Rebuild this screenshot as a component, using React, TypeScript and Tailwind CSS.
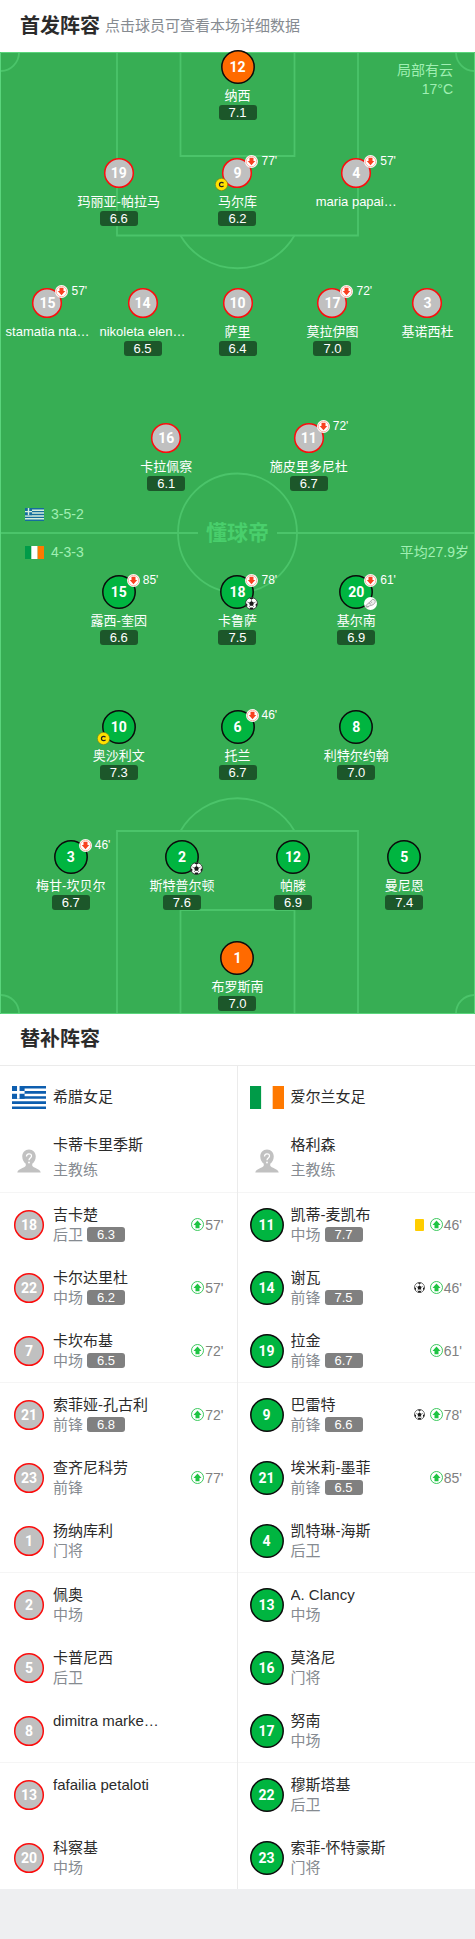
import React from "react";
import { clsx } from "clsx";

type Kit = "grey" | "green" | "orange";

interface PitchPlayer {
  no: number;
  name: string;
  rating?: string;
  off?: string;
  captain?: boolean;
  goal?: boolean;
  assist?: boolean;
  kit: Kit;
}

interface BenchPlayer {
  no: number;
  name: string;
  role?: string;
  rating?: string;
  on?: string;
  goal?: boolean;
  yellow?: boolean;
}

const homeRows: PitchPlayer[][] = [
  [{ no: 12, name: "纳西", rating: "7.1", kit: "orange" }],
  [
    { no: 19, name: "玛丽亚-帕拉马", rating: "6.6", kit: "grey" },
    { no: 9, name: "马尔库", rating: "6.2", off: "77'", captain: true, kit: "grey" },
    { no: 4, name: "maria papai…", off: "57'", kit: "grey" },
  ],
  [
    { no: 15, name: "stamatia nta…", off: "57'", kit: "grey" },
    { no: 14, name: "nikoleta elen…", rating: "6.5", kit: "grey" },
    { no: 10, name: "萨里", rating: "6.4", kit: "grey" },
    { no: 17, name: "莫拉伊图", rating: "7.0", off: "72'", kit: "grey" },
    { no: 3, name: "基诺西杜", kit: "grey" },
  ],
  [
    { no: 16, name: "卡拉佩察", rating: "6.1", kit: "grey" },
    { no: 11, name: "施皮里多尼杜", rating: "6.7", off: "72'", kit: "grey" },
  ],
];

const awayRows: PitchPlayer[][] = [
  [
    { no: 15, name: "露西-奎因", rating: "6.6", off: "85'", kit: "green" },
    { no: 18, name: "卡鲁萨", rating: "7.5", off: "78'", goal: true, kit: "green" },
    { no: 20, name: "基尔南", rating: "6.9", off: "61'", assist: true, kit: "green" },
  ],
  [
    { no: 10, name: "奥沙利文", rating: "7.3", captain: true, kit: "green" },
    { no: 6, name: "托兰", rating: "6.7", off: "46'", kit: "green" },
    { no: 8, name: "利特尔约翰", rating: "7.0", kit: "green" },
  ],
  [
    { no: 3, name: "梅甘-坎贝尔", rating: "6.7", off: "46'", kit: "green" },
    { no: 2, name: "斯特普尔顿", rating: "7.6", goal: true, kit: "green" },
    { no: 12, name: "帕滕", rating: "6.9", kit: "green" },
    { no: 5, name: "曼尼恩", rating: "7.4", kit: "green" },
  ],
  [{ no: 1, name: "布罗斯南", rating: "7.0", kit: "orange" }],
];

const homeBench: BenchPlayer[] = [
  { no: 18, name: "吉卡楚", role: "后卫", rating: "6.3", on: "57'" },
  { no: 22, name: "卡尔达里杜", role: "中场", rating: "6.2", on: "57'" },
  { no: 7, name: "卡坎布基", role: "中场", rating: "6.5", on: "72'" },
  { no: 21, name: "索菲娅-孔古利", role: "前锋", rating: "6.8", on: "72'" },
  { no: 23, name: "查齐尼科劳", role: "前锋", on: "77'" },
  { no: 1, name: "扬纳库利", role: "门将" },
  { no: 2, name: "佩奥", role: "中场" },
  { no: 5, name: "卡普尼西", role: "后卫" },
  { no: 8, name: "dimitra marke…" },
  { no: 13, name: "fafailia petaloti" },
  { no: 20, name: "科察基", role: "中场" },
];

const awayBench: BenchPlayer[] = [
  { no: 11, name: "凯蒂-麦凯布", role: "中场", rating: "7.7", on: "46'", yellow: true },
  { no: 14, name: "谢瓦", role: "前锋", rating: "7.5", on: "46'", goal: true },
  { no: 19, name: "拉金", role: "前锋", rating: "6.7", on: "61'" },
  { no: 9, name: "巴雷特", role: "前锋", rating: "6.6", on: "78'", goal: true },
  { no: 21, name: "埃米莉-墨菲", role: "前锋", rating: "6.5", on: "85'" },
  { no: 4, name: "凯特琳-海斯", role: "后卫" },
  { no: 13, name: "A. Clancy", role: "中场" },
  { no: 16, name: "莫洛尼", role: "门将" },
  { no: 17, name: "努南", role: "中场" },
  { no: 22, name: "穆斯塔基", role: "后卫" },
  { no: 23, name: "索菲-怀特豪斯", role: "门将" },
];

const kitStyle = {
  grey: { fill: "#c0c0c0", stroke: "#fb0d0d", r: 14.3 },
  green: { fill: "#00b540", stroke: "#0b0b0b", r: 16.2 },
  orange: { fill: "#ff6a00", stroke: "#0b0b0b", r: 16.2 },
};

function Shirt({ no, kit }: { no: number; kit: Kit }) {
  const k = kitStyle[kit];
  return (
    <span className="grid size-[34px] shrink-0 place-items-center">
      <svg viewBox="0 0 34 34" className="col-start-1 row-start-1 size-[34px]" aria-hidden="true">
        <circle cx="17" cy="17" r={k.r} fill={k.fill} stroke={k.stroke} strokeWidth="1.5" />
      </svg>
      <span className="col-start-1 row-start-1 font-[Roboto,sans-serif] text-[14px] leading-none font-bold text-white">
        {no}
      </span>
    </span>
  );
}

function OffIcon({ className }: { className?: string }) {
  return (
    <svg viewBox="0 0 26 26" className={className} aria-hidden="true">
      <circle cx="13" cy="13" r="13" fill="#fff" />
      <circle cx="13" cy="13" r="10.5" fill="#fff" stroke="#fb6a50" strokeWidth="1" />
      <path d="M9 5.500h8v6.500H20.500L13 20.500 5.500 12H9z" fill="#f9401f" />
    </svg>
  );
}

function OnIcon({ className }: { className?: string }) {
  return (
    <svg viewBox="0 0 26 26" className={className} aria-hidden="true">
      <circle cx="13" cy="13" r="12" fill="#fff" stroke="#27c24c" strokeWidth="1.800" />
      <path d="M9 20.500h8V14H21L13 5 5 14h4z" fill="#1fc443" />
    </svg>
  );
}

function BallIcon({ className }: { className?: string }) {
  return (
    <svg viewBox="0 0 24 24" className={className} aria-hidden="true">
      <circle cx="12" cy="12" r="11" fill="#fff" stroke="#1a1a1a" strokeWidth="1.300" />
      <path
        d="M12 7.500l4.500 3.300-1.700 5.300H9.200l-1.700-5.300zM7.500 2.200 12 4.600l4.500-2.400a11 11 0 0 0-9 0zM22.900 10.500l-3.500 3.300.9 5a11 11 0 0 0 2.600-8.300zM1.100 10.500l3.500 3.300-.9 5a11 11 0 0 1-2.600-8.300zM8 22.200l1.800-3h4.400l1.800 3a11 11 0 0 1-8 0z"
        fill="#1a1a1a"
      />
      <path
        d="M12 7.500V4.600M16.500 10.800l3-1.500M14.800 16.100l1.800 2.600M9.200 16.100l-1.800 2.600M7.500 10.800l-3-1.500"
        stroke="#1a1a1a"
        strokeWidth="1"
      />
    </svg>
  );
}

function BootIcon({ className }: { className?: string }) {
  return (
    <svg viewBox="0 0 24 24" className={className} aria-hidden="true">
      <circle cx="12" cy="12" r="12" fill="#fff" />
      <path
        d="M3 17c1-3 4-4 6-6l7-7 4.500 2c1 3-.5 6-3.500 8-3 2-6 1.500-8 3-2 1.300-5 2-6 0z"
        fill="#eee"
        stroke="#8a8a8a"
        strokeWidth="1.300"
      />
      <path d="M9 11l4 2.500M12 8.500l3 2M4 18.500l5-.5" stroke="#8a8a8a" strokeWidth="1.200" />
    </svg>
  );
}

function CaptainIcon({ className }: { className?: string }) {
  return (
    <svg viewBox="0 0 26 26" className={className} aria-hidden="true">
      <circle cx="13" cy="13" r="12.300" fill="#ffe100" stroke="#6b7a1c" strokeWidth="1.200" />
      <path
        d="M17 10.500c-.8-1.300-2.200-1.900-3.700-1.900-2.600 0-4.400 1.900-4.400 4.400s1.800 4.400 4.400 4.400c1.500 0 2.900-.6 3.700-1.900"
        fill="none"
        stroke="#222"
        strokeWidth="2.400"
      />
    </svg>
  );
}

function GreeceFlag({ className }: { className?: string }) {
  return (
    <svg viewBox="0 0 27 18" preserveAspectRatio="none" className={className} role="img" aria-label="希腊">
      <path fill="#fff" d="M0 0h27v18H0z" />
      <path stroke="#0d5eaf" strokeWidth="2" d="M0 1h27M0 5h27M0 9h27M0 13h27M0 17h27" />
      <path fill="#0d5eaf" d="M0 0h10v10H0z" />
      <path stroke="#fff" strokeWidth="2" d="M5 0v10M0 5h10" />
    </svg>
  );
}

function IrelandFlag({ className }: { className?: string }) {
  return (
    <svg viewBox="0 0 3 2" preserveAspectRatio="none" className={className} role="img" aria-label="爱尔兰">
      <path fill="#009b48" d="M0 0h1v2H0z" />
      <path fill="#fff" d="M1 0h1v2H1z" />
      <path fill="#ff7900" d="M2 0h1v2H2z" />
    </svg>
  );
}

function CoachIcon() {
  return (
    <svg viewBox="0 0 48 48" className="size-6" aria-hidden="true">
      <path
        d="M24 1c8 0 13.500 6 13.500 14 0 6-3 11.500-7 14.500v4c2 5 15 5 17 13.500H.5c2-8.500 15-8.500 17-13.500v-4c-4-3-7-8.500-7-14.500C10.500 7 16 1 24 1z"
        fill="#c1c1c1"
      />
      <path
        d="M19 15c0-7 10-7 10-1 0 4-5 4-5 8.500"
        fill="none"
        stroke="#fff"
        strokeWidth="2.600"
      />
      <circle cx="24" cy="27" r="1.800" fill="#fff" />
    </svg>
  );
}

function PitchLines() {
  return (
    <svg
      viewBox="0 0 475 962"
      preserveAspectRatio="none"
      className="absolute inset-0 h-full w-full"
      fill="none"
      stroke="#4bc46a"
      strokeWidth="1.800"
      aria-hidden="true"
    >
      <path d="M180.500 1v103h114V1M117 1v182.500h241V1" />
      <path d="M180.500 183.500a66 66 0 0 0 114 0" />
      <path d="M180.500 961V858h114v103M117 961V779h241v182" />
      <path d="M180.500 779a66 66 0 0 1 114 0" />
      <circle cx="237.500" cy="481" r="59.500" />
      <path d="M0 481h198M277 481h198" />
      <path d="M19 1a18.500 18.500 0 0 1-18 18M456 1a18.500 18.500 0 0 0 18 18M19 961a18.500 18.500 0 0 0-18-18M456 961a18.500 18.500 0 0 1 18-18" />
      <path d="M.5.5h474v961H.5z" stroke="#5ad57c" strokeWidth="1" />
    </svg>
  );
}

function PlayerSpot({ p }: { p: PitchPlayer }) {
  return (
    <li className="flex justify-center">
      <button type="button" className="flex h-[70px] flex-col items-center whitespace-nowrap text-white">
        <span className="relative">
          <Shirt no={p.no} kit={p.kit} />
          {p.off && (
            <span className="absolute -top-[1px] left-[25px] flex items-center gap-[3px] text-[12px] leading-[13px]">
              <OffIcon className="size-[13px]" />
              {p.off}
            </span>
          )}
          {p.captain && <CaptainIcon className="absolute bottom-[-1px] left-[-5px] size-[13px]" />}
          {p.goal && <BallIcon className="absolute right-[-4px] bottom-[-1px] size-[13px]" />}
          {p.assist && <BootIcon className="absolute right-[-4px] bottom-[-1px] size-[13px]" />}
        </span>
        <span className="mt-[3px] text-[13px] leading-[18px]">{p.name}</span>
        {p.rating && (
          <span className="w-[38px] rounded-[3px] bg-[#1c572a] text-center text-[13px] leading-[15px]">
            {p.rating}
          </span>
        )}
      </button>
    </li>
  );
}

const rowLayout: Record<number, string> = {
  1: "grid-cols-1",
  2: "grid-cols-2 px-[20%]",
  3: "grid-cols-3 px-[12.500%]",
  4: "grid-cols-4 px-[3.200%]",
  5: "grid-cols-5",
};

function Row({ players, gap }: { players: PitchPlayer[]; gap: string }) {
  return (
    <ul className={clsx("grid", rowLayout[players.length], gap)}>
      {players.map((p) => (
        <PlayerSpot key={p.no} p={p} />
      ))}
    </ul>
  );
}

const homeGaps = ["-mt-[2px]", "mt-9", "mt-[60px]", "mt-[65px]"];
const awayGaps = ["", "mt-[65px]", "mt-[60px]", "mt-[31px]"];

function Pitch() {
  return (
    <section className="relative bg-[#37ae54] pb-[3px]">
      <PitchLines />
      <p className="absolute top-[9px] right-[22px] text-right text-[14px] leading-[19px] text-[#a0efb3]">
        局部有云
        <br />
        17°C
      </p>
      <div className="relative flow-root">
        {homeRows.map((row, i) => (
          <Row key={i} players={row} gap={homeGaps[i]} />
        ))}
        <div className="grid grid-cols-[1fr_auto_1fr] items-center py-[14px] text-[14px] leading-[18px] text-[#a0efb3]">
          <div className="flex flex-col gap-5 pl-[25px]">
            <div className="flex items-center gap-[7px]">
              <GreeceFlag className="h-[13px] w-[19px] opacity-80" />
              3-5-2
            </div>
            <div className="flex items-center gap-[7px]">
              <IrelandFlag className="h-[13px] w-[19px]" />
              4-3-3
            </div>
          </div>
          <div className="text-[21px] font-bold text-[#49cf6c]">懂球帝</div>
          <div className="self-end pr-[6px] text-right">平均27.9岁</div>
        </div>
        {awayRows.map((row, i) => (
          <Row key={i} players={row} gap={awayGaps[i]} />
        ))}
      </div>
    </section>
  );
}

function BenchRow({ p, kit, divided }: { p: BenchPlayer; kit: Kit; divided: boolean }) {
  return (
    <li className={clsx(divided && "border-t border-[#f5f5f5]")}>
      <button type="button" className="flex h-[63px] w-full items-center pr-[13px] pl-3 text-left">
        <Shirt no={p.no} kit={kit} />
        <span className="ml-[7px] flex h-10 min-w-0 flex-1 flex-col">
          <span className="truncate text-[15px] leading-5 text-[#2b2b2b]">{p.name}</span>
          <span className="flex items-center gap-1 text-[15px] leading-5 text-[#868b91]">
            {p.role}
            {p.rating && (
              <span className="w-[38px] rounded-[3px] bg-[#808080] text-center text-[13px] leading-[15px] text-white">
                {p.rating}
              </span>
            )}
          </span>
        </span>
        {p.on && (
          <span className="flex items-center text-[14px] leading-5 text-[#808080]">
            {p.yellow && <span className="mr-[6px] h-3 w-[9px] rounded-[1px] bg-[#ffcd00]" />}
            {p.goal && <BallIcon className="mr-[5px] size-[11px]" />}
            <OnIcon className="mr-[1px] size-[13px]" />
            {p.on}
          </span>
        )}
      </button>
    </li>
  );
}

function BenchColumn(props: {
  team: string;
  coach: string;
  flag: React.ReactNode;
  players: BenchPlayer[];
  kit: Kit;
}) {
  return (
    <div className="min-w-0 text-[15px] text-[#2b2b2b]">
      <h3 className="flex h-[62px] items-center gap-[7px] px-3">
        {props.flag}
        {props.team}
      </h3>
      <div className="flex h-16 items-start px-3">
        <span className="mt-[21px] flex w-[34px] justify-center">
          <CoachIcon />
        </span>
        <p className="mt-1 ml-[7px] leading-[25px]">
          {props.coach}
          <br />
          <span className="text-[#868b91]">主教练</span>
        </p>
      </div>
      <ul>
        {props.players.map((p, i) => (
          <BenchRow key={p.no} p={p} kit={props.kit} divided={i % 3 === 0} />
        ))}
      </ul>
    </div>
  );
}

export default function App() {
  return (
    <div className="min-h-screen bg-[#eeeff1] font-['Liberation_Sans','Noto_Sans_CJK_SC',sans-serif]">
      <main className="bg-white">
        <header className="flex h-[52px] items-center gap-[5px] px-5">
          <h1 className="text-[20px] leading-[48px] font-bold text-[#2b2b2b]">首发阵容</h1>
          <p className="text-[15px] text-[#868b91]">点击球员可查看本场详细数据</p>
        </header>
        <Pitch />
        <h2 className="h-[52px] border-b border-[#ebebeb] px-5 text-[20px] leading-[50px] font-bold text-[#2b2b2b]">
          替补阵容
        </h2>
        <section className="grid grid-cols-2 divide-x divide-[#ebebeb]">
          <BenchColumn
            team="希腊女足"
            coach="卡蒂卡里季斯"
            flag={<GreeceFlag className="h-[23px] w-[34px]" />}
            players={homeBench}
            kit="grey"
          />
          <BenchColumn
            team="爱尔兰女足"
            coach="格利森"
            flag={<IrelandFlag className="h-[23px] w-[34px]" />}
            players={awayBench}
            kit="green"
          />
        </section>
      </main>
    </div>
  );
}
